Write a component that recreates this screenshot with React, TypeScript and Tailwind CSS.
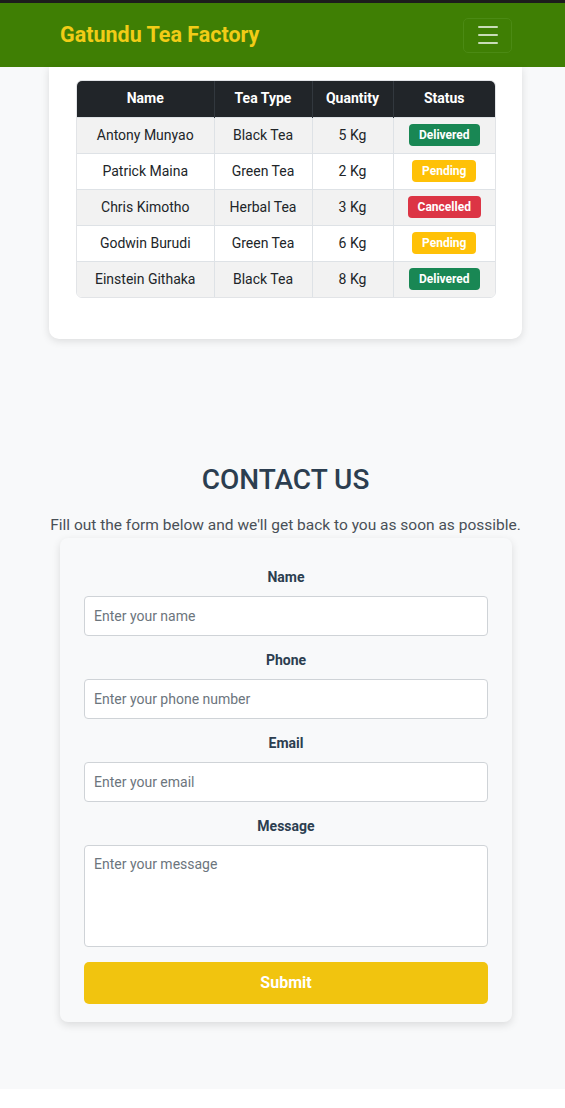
import React from 'react';

type Order = {
  name: string;
  tea: string;
  qty: string;
  status: 'Delivered' | 'Pending' | 'Cancelled';
};

const orders: Order[] = [
  { name: 'Antony Munyao', tea: 'Black Tea', qty: '5 Kg', status: 'Delivered' },
  { name: 'Patrick Maina', tea: 'Green Tea', qty: '2 Kg', status: 'Pending' },
  { name: 'Chris Kimotho', tea: 'Herbal Tea', qty: '3 Kg', status: 'Cancelled' },
  { name: 'Godwin Burudi', tea: 'Green Tea', qty: '6 Kg', status: 'Pending' },
  { name: 'Einstein Githaka', tea: 'Black Tea', qty: '8 Kg', status: 'Delivered' },
];

const badgeColors: Record<Order['status'], string> = {
  Delivered: 'bg-[#198754]',
  Pending: 'bg-[#ffc107]',
  Cancelled: 'bg-[#dc3545]',
};

function Navbar() {
  return (
    <div className="border-t-[3px] border-[#1c1c1c] bg-[#3f7f04]">
      <div className="flex items-center justify-between h-[64px] pl-[60px] pr-[53px]">
        <span className="text-[21.5px] font-bold text-[#f1cc17]">Gatundu Tea Factory</span>
        <button className="w-[49px] h-[35px] rounded-[5px] border border-[#4b8a14] flex flex-col items-center justify-center gap-[6px]">
          <span className="block w-[20px] h-[2px] bg-[#c9dcb8] rounded" />
          <span className="block w-[20px] h-[2px] bg-[#c9dcb8] rounded" />
          <span className="block w-[20px] h-[2px] bg-[#c9dcb8] rounded" />
        </button>
      </div>
    </div>
  );
}

function OrdersTable() {
  return (
    <div className="ml-[49px] w-[473px] bg-white rounded-b-[10px] shadow-[0_2px_8px_rgba(0,0,0,0.12)] pt-[13px] pb-[41px] px-[27px]">
      <div className="w-[420px] rounded-[6px] overflow-hidden border border-[#e2e4e7]">
        <table className="w-full border-collapse text-[14px] text-center">
          <thead>
            <tr className="bg-[#212529] text-white font-bold h-[36px]">
              <th className="w-[137px] font-bold border-r border-[#32383e]">Name</th>
              <th className="w-[98px] font-bold border-r border-[#32383e]">Tea Type</th>
              <th className="w-[81px] font-bold border-r border-[#32383e]">Quantity</th>
              <th className="font-bold">Status</th>
            </tr>
          </thead>
          <tbody>
            {orders.map((o, i) => (
              <tr key={o.name} className={`h-[36px] text-[#212529] ${i % 2 === 0 ? 'bg-[#f2f2f2]' : 'bg-white'} border-t border-[#dee2e6]`}>
                <td className="border-r border-[#dee2e6]">{o.name}</td>
                <td className="border-r border-[#dee2e6]">{o.tea}</td>
                <td className="border-r border-[#dee2e6]">{o.qty}</td>
                <td>
                  <span className={`inline-block px-[10px] h-[22px] rounded-[4px] text-[12px] font-bold text-white leading-[22px] align-middle ${badgeColors[o.status]}`}>
                    {o.status}
                  </span>
                </td>
              </tr>
            ))}
          </tbody>
        </table>
      </div>
    </div>
  );
}

function Field({ label, placeholder }: { label: string; placeholder: string }) {
  return (
    <div className="flex flex-col items-center">
      <label className="text-[14px] leading-[20px] font-bold text-[#2c3e50]">{label}</label>
      <input
        placeholder={placeholder}
        className="mt-[9px] w-[404px] h-[40px] px-[9px] bg-white border border-[#cfd3d7] rounded-[4px] text-[14px] placeholder:text-[#6c757d] outline-none"
      />
    </div>
  );
}

function ContactSection() {
  return (
    <div className="pt-[124px] pb-[67px] pl-[6px] flex flex-col items-center">
      <h2 className="text-[28px] leading-[34px] font-medium text-[#2c3e50]">CONTACT US</h2>
      <p className="mt-[16px] text-[15.5px] leading-[24px] text-[#495057]">
        Fill out the form below and we'll get back to you as soon as possible.
      </p>
      <form className="mt-[1px] w-[452px] ml-[1px] bg-[#f8f9fa] rounded-[8px] shadow-[0_3px_8px_rgba(0,0,0,0.12)] pt-[29px] pb-[18px] px-[24px] flex flex-col gap-[14px]">
        <Field label="Name" placeholder="Enter your name" />
        <Field label="Phone" placeholder="Enter your phone number" />
        <Field label="Email" placeholder="Enter your email" />
        <div className="flex flex-col items-center">
          <label className="text-[14px] leading-[20px] font-bold text-[#2c3e50]">Message</label>
          <textarea
            placeholder="Enter your message"
            className="mt-[9px] w-[404px] h-[102px] px-[9px] py-[8px] bg-white border border-[#cfd3d7] rounded-[4px] text-[14px] placeholder:text-[#6c757d] outline-none resize-none"
          />
        </div>
        <button
          type="button"
          className="mt-[1px] w-[404px] h-[42px] rounded-[5px] bg-[#f1c40f] text-white text-[16px] font-bold"
        >
          Submit
        </button>
      </form>
    </div>
  );
}

export default function App() {
  return (
    <div className="min-h-[1108px] bg-white" style={{ fontFamily: 'Roboto, "Liberation Sans", sans-serif' }}>
      <Navbar />
      <div className="bg-[#f8f9fa]">
        <OrdersTable />
        <ContactSection />
      </div>
    </div>
  );
}
